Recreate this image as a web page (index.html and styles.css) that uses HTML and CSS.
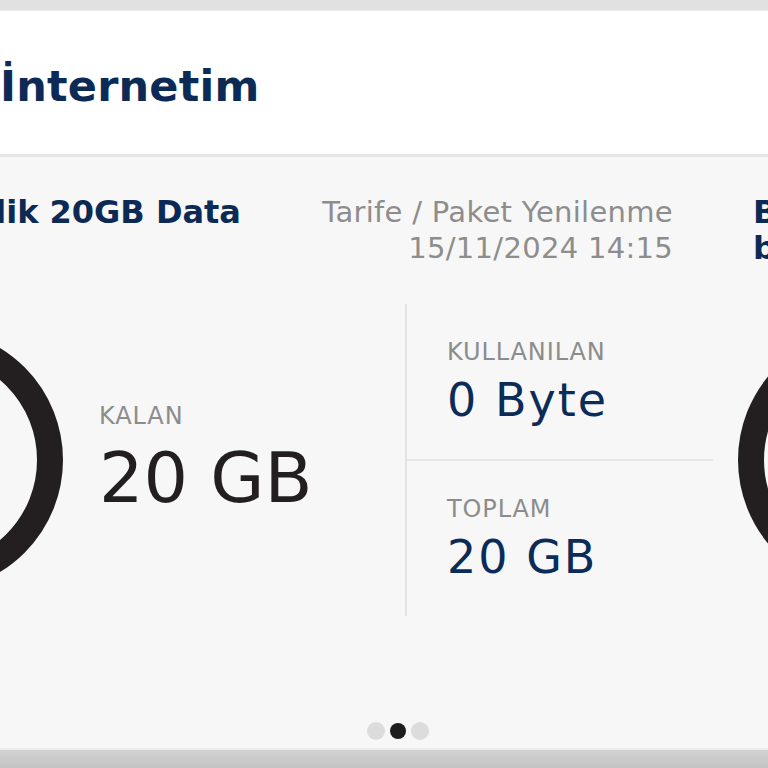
FILE: index.html
```html
<!DOCTYPE html>
<html lang="tr">
<head>
<meta charset="utf-8">
<title>İnternetim</title>
<link rel="stylesheet" href="styles.css">
</head>
<body>
<div class="screen">
  <div class="topband"></div>
  <header class="header">
    <h1 class="page-title">İnternetim</h1>
  </header>
  <main class="panel">
    <div class="viewport">
      <div class="track">
        <section class="slide">
          <div class="slide-head">
            <h2 class="pkg-title">Ek Hediyelik 20GB Data</h2>
            <p class="renewal">Tarife / Paket Yenilenme<br>15/11/2024 14:15</p>
          </div>
          <div class="stats">
            <div class="ring"></div>
            <div class="remain">
              <span class="label">KALAN</span>
              <span class="value">20 GB</span>
            </div>
            <div class="split">
              <div class="cell cell-top">
                <span class="label">KULLANILAN</span>
                <span class="value-sm">0 Byte</span>
              </div>
              <div class="cell">
                <span class="label">TOPLAM</span>
                <span class="value-sm">20 GB</span>
              </div>
            </div>
          </div>
        </section>
        <section class="slide">
          <div class="slide-head">
            <h2 class="pkg-title">Bonus Paket<br>bedava 5GB</h2>
            <p class="renewal">Tarife / Paket Yenilenme<br>15/11/2024 14:15</p>
          </div>
          <div class="stats">
            <div class="ring"></div>
            <div class="remain">
              <span class="label">KALAN</span>
              <span class="value">5 GB</span>
            </div>
            <div class="split">
              <div class="cell cell-top">
                <span class="label">KULLANILAN</span>
                <span class="value-sm">0 Byte</span>
              </div>
              <div class="cell">
                <span class="label">TOPLAM</span>
                <span class="value-sm">5 GB</span>
              </div>
            </div>
          </div>
        </section>
      </div>
    </div>
    <div class="dots">
      <span class="dot"></span>
      <span class="dot dot-active"></span>
      <span class="dot"></span>
    </div>
  </main>
  <div class="bottomband"></div>
</div>
</body>
</html>
```

FILE: styles.css
```css
html, body {
  margin: 0;
  padding: 0;
}

body {
  width: 768px;
  height: 768px;
  overflow: hidden;
  background: #f7f7f7;
  font-family: "DejaVu Sans", "Liberation Sans", sans-serif;
}

.screen {
  display: flex;
  flex-direction: column;
  width: 768px;
  height: 768px;
}

.topband {
  flex: none;
  height: 10px;
  background: #e1e1e1;
  border-bottom: 1px solid #ececec;
}

.header {
  flex: none;
  height: 146px;
  background: #ffffff;
  border-bottom: 3px solid #e6e6e6;
  box-sizing: border-box;
  padding: 54px 0 0 0;
}

.page-title {
  margin: 0;
  font-size: 43px;
  line-height: 43px;
  font-weight: 700;
  color: #0c2a56;
  letter-spacing: 0.2px;
}

.panel {
  flex: 1;
  display: flex;
  flex-direction: column;
  background: #f7f7f7;
  min-height: 0;
}

.viewport {
  overflow: hidden;
  width: 768px;
}

.track {
  display: flex;
  margin-left: -199px;
}

.slide {
  flex: none;
  width: 912px;
  margin-right: 25px;
  display: flex;
  flex-direction: column;
}

.slide-head {
  display: flex;
  justify-content: space-between;
  align-items: flex-start;
  padding: 37px 40px 38px 15px;
}

.pkg-title {
  margin: 0;
  font-size: 32px;
  line-height: 36px;
  font-weight: 700;
  color: #0c2a56;
  white-space: nowrap;
}

.renewal {
  margin: 0;
  text-align: right;
  font-size: 29px;
  line-height: 36px;
  font-weight: 400;
  color: #8d8d8d;
  letter-spacing: 0.3px;
}

.stats {
  display: flex;
  align-items: center;
  height: 312px;
}

.ring {
  flex: none;
  width: 262px;
  height: 262px;
  box-sizing: border-box;
  border: 26px solid #231f20;
  border-radius: 50%;
}

.remain {
  flex: none;
  width: 342px;
  box-sizing: border-box;
  padding: 0 0 4px 36px;
  display: flex;
  flex-direction: column;
  gap: 11px;
}

.label {
  display: block;
  font-size: 24px;
  line-height: 28px;
  color: #8c8c8c;
  letter-spacing: 0.9px;
}

.value {
  display: block;
  font-size: 70px;
  line-height: 74px;
  color: #231f20;
}

.split {
  flex: none;
  width: 308px;
  height: 312px;
  border-left: 2px solid #e3e3e3;
  box-sizing: border-box;
  display: flex;
  flex-direction: column;
}

.cell {
  flex: 1;
  box-sizing: border-box;
  padding: 34px 0 0 40px;
  display: flex;
  flex-direction: column;
  gap: 9px;
}

.cell-top {
  border-bottom: 2px solid #e6e6e6;
}

.value-sm {
  display: block;
  font-size: 46px;
  line-height: 50px;
  color: #0b2c58;
  letter-spacing: 2px;
}

.dots {
  margin-top: auto;
  display: flex;
  justify-content: center;
  align-items: center;
  gap: 5px;
  padding: 0 0 8px 28px;
}

.dot {
  width: 18px;
  height: 18px;
  border-radius: 50%;
  background: #dcdcdc;
}

.dot-active {
  width: 16px;
  height: 16px;
  background: #1d1d1d;
}

.bottomband {
  flex: none;
  height: 18px;
  border-top: 2px solid #ececec;
  background: linear-gradient(#d2d2d2, #c3c3c3);
}
```
